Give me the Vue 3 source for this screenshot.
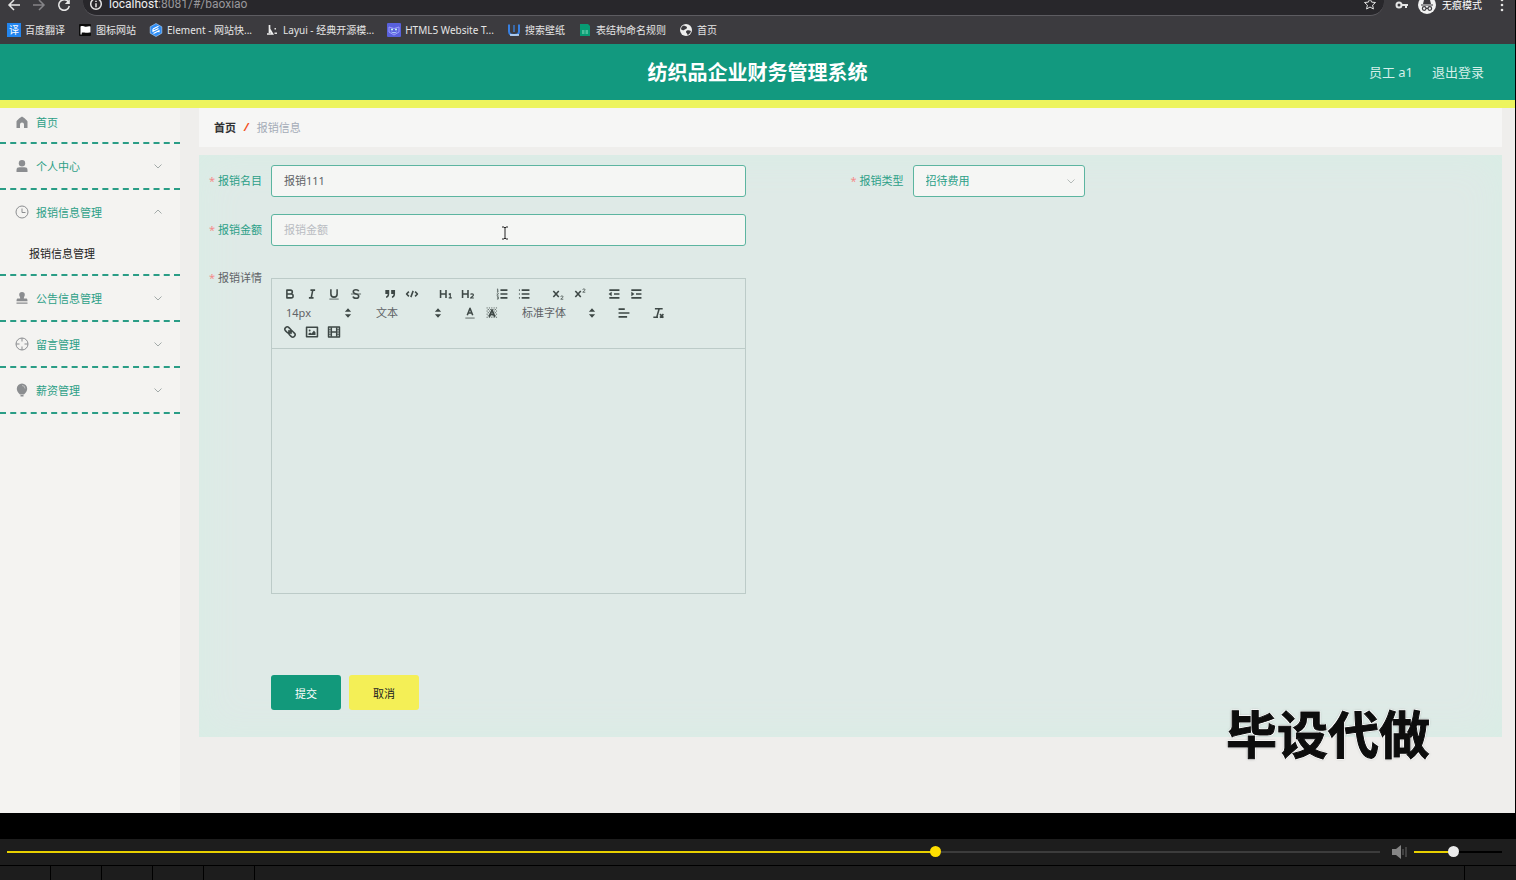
<template>
  <div class="player">
    <div class="screen">
      <div class="browser">
        <div class="toolbar">
          <svg class="nav" viewBox="0 0 14 14"><path d="M13 7H2M7 2L2 7l5 5" /></svg>
          <svg class="nav dim" viewBox="0 0 14 14"><path d="M1 7h11M7 2l5 5-5 5" /></svg>
          <svg class="nav" viewBox="0 0 14 14"><path d="M11.5 4A5.3 5.3 0 1 0 12.300 8" /><path class="solid" d="M12.800 1v5H7.800z" /></svg>
          <div class="address">
            <svg class="info" viewBox="0 0 14 14"><circle cx="7" cy="7" r="5.300" /><path d="M7 6.300v4M7 3.700v1.300" /></svg>
            <span class="url"><b>localhost</b>:8081/#/baoxiao</span>
            <svg class="star" viewBox="0 0 14 14"><path d="M7 1.500l1.600 3.600 3.900.4-2.900 2.600.8 3.900L7 10l-3.400 2 .8-3.900L1.500 5.500l3.900-.4z" /></svg>
          </div>
          <svg class="key" viewBox="0 0 14 14"><circle cx="4" cy="7" r="2.500" /><path d="M6.500 7H13M11 7v3" /></svg>
          <div class="incognito">
            <svg viewBox="0 0 18 18">
              <circle cx="9" cy="9" r="9" fill="#f1f1f1" />
              <path d="M6 4h6l1 4H5zM3 8.500h12v1H3z" fill="#3a393d" />
              <g fill="none" stroke="#3a393d" stroke-width="1.200"><circle cx="6.200" cy="12.500" r="1.800" /><circle cx="11.800" cy="12.500" r="1.800" /><path d="M8 12.300h2" /></g>
            </svg>
            <span>无痕模式</span>
          </div>
          <svg class="more" viewBox="0 0 4 14"><circle cx="2" cy="2" r="1.300" /><circle cx="2" cy="7" r="1.300" /><circle cx="2" cy="12" r="1.300" /></svg>
        </div>
        <nav class="bookmarks">
          <a v-for="b in bookmarks" :key="b.text" href="#" :class="b.icon">
            <span v-if="b.icon === 'fanyi'" class="fanyi-icon">译</span>
            <svg v-else viewBox="0 0 14 14" v-html="bookmarkIcons[b.icon]"></svg>
            <span>{{ b.text }}</span>
          </a>
        </nav>
      </div>

      <header class="header">
        <h1>纺织品企业财务管理系统</h1>
        <div class="user">
          <span>员工 a1</span>
          <a href="#">退出登录</a>
        </div>
      </header>

      <div class="body">
        <aside class="sidebar">
          <ul>
            <li v-for="m in menus" :key="m.text" :class="{ home: m.icon === 'home' }">
              <a href="#" class="menu-title">
                <svg class="menu-icon" viewBox="0 0 14 14" v-html="menuIcons[m.icon]"></svg>
                <span>{{ m.text }}</span>
                <svg v-if="m.icon !== 'home'" class="arrow" :class="{ open: m.child }" viewBox="0 0 8 8"><path d="M.5 2.500L4 6l3.500-3.500" /></svg>
              </a>
              <a v-if="m.child" href="#" class="menu-child">{{ m.child }}</a>
            </li>
          </ul>
        </aside>

        <main class="main">
          <nav class="breadcrumb">
            <a href="#">首页</a>
            <i>/</i>
            <span>报销信息</span>
          </nav>

          <form class="form" @submit.prevent>
            <div class="item">
              <label for="name">报销名目</label>
              <input id="name" v-model="form.name" class="field" type="text">
            </div>
            <div class="item">
              <label for="type">报销类型</label>
              <div class="select">
                <select id="type" v-model="form.type">
                  <option>招待费用</option>
                </select>
                <svg class="arrow" viewBox="0 0 8 8"><path d="M.5 2.500L4 6l3.500-3.500" /></svg>
              </div>
            </div>
            <div class="item wide">
              <label for="money">报销金额</label>
              <div class="field-box">
                <input id="money" v-model="form.money" class="field" type="text" placeholder="报销金额">
                <svg class="cursor" viewBox="0 0 8 14"><path d="M1 1h2l1 1 1-1h2M4 2v10M1 13h2l1-1 1 1h2" /></svg>
              </div>
            </div>
            <div class="item wide detail">
              <label for="detail">报销详情</label>
              <div class="editor">
                <div class="tools">
                  <div v-for="(row, r) in tools" :key="r" class="tool-row">
                    <div v-for="(group, g) in row" :key="g" class="tool-group">
                      <template v-for="t in group" :key="t.pick || t">
                        <label v-if="t.pick" class="picker" :class="{ long: t.long }">
                          <select :aria-label="t.pick"><option>{{ t.pick }}</option></select>
                          <svg viewBox="0 0 18 18"><path class="fill" d="M5 7.500L9 3l4 4.500zM5 10.500L9 15l4-4.500z" /></svg>
                        </label>
                        <button v-else type="button" :aria-label="t">
                          <svg viewBox="0 0 18 18" v-html="toolIcons[t]"></svg>
                        </button>
                      </template>
                    </div>
                  </div>
                </div>
                <textarea id="detail" v-model="form.detail"></textarea>
              </div>
            </div>
            <div class="actions">
              <button type="submit" class="btn primary">提交</button>
              <button type="button" class="btn cancel">取消</button>
            </div>
          </form>
        </main>
      </div>

      <div class="watermark">毕设代做</div>
    </div>

    <div class="controls">
      <input
        v-model="progress"
        class="range seek"
        type="range"
        max="1000"
        aria-label="进度"
        :style="{ '--p': progress / 10 + '%' }"
      >
      <svg class="speaker" viewBox="0 0 16 14"><path d="M0 4h4l5-4v14L4 10H0z" fill="#858585" /><path d="M11 4v6M14 2v10" stroke="#666" /></svg>
      <input
        v-model="volume"
        class="range volume"
        type="range"
        max="1000"
        aria-label="音量"
        :style="{ '--p': volume / 10 + '%' }"
      >
    </div>
    <div class="cells">
      <span v-for="n in 5" :key="n"></span>
    </div>
  </div>
</template>

<script setup>
import { reactive, ref } from 'vue'

const progress = ref(678)
const volume = ref(442)

const form = reactive({
  name: '报销111',
  type: '招待费用',
  money: '',
  detail: ''
})

const bookmarks = [
  { icon: 'fanyi', text: '百度翻译' },
  { icon: 'flag', text: '图标网站' },
  { icon: 'element', text: 'Element - 网站快...' },
  { icon: 'layui', text: 'Layui - 经典开源模...' },
  { icon: 'html5', text: 'HTML5 Website T...' },
  { icon: 'paper', text: '搜索壁纸' },
  { icon: 'sheet', text: '表结构命名规则' },
  { icon: 'globe', text: '首页' }
]

const bookmarkIcons = {
  flag: '<rect x="1" y="1" width="12" height="12" rx="1" fill="#0c0c0c"/><path d="M2.500 11.500V3.500c2.500-1.200 3.500.6 5.500.2s3-.7 4.500-.2V9.500c-2-.4-3 .6-5 .2s-3-.4-3.800.1v1.700z" fill="#fff"/>',
  element: '<path d="M7 .5l5.800 3.300v6.400L7 13.500l-5.800-3.300V3.800z" fill="#2e8df5" stroke="#bcdcff" stroke-width=".6"/><path d="M4 6l5.500-2.800M4.500 10.500l5.500-2.800v1.500M4 6v2.300L9.500 5.500" stroke="#fff" stroke-width="1.200" fill="none"/>',
  layui: '<path d="M4.500 2v8M4.500 6l3 5H2" stroke="#eee" stroke-width="1.700" fill="none"/><path d="M9.500 5h1.500v1.500H9.500zM9.500 9.500H12V11H9.500z" fill="#ddd"/>',
  html5: '<rect x="0" y="0" width="14" height="14" rx="1" fill="#5961dc"/><path d="M2 4l5 1.500L12 4v5l-5 3-5-3z" fill="none" stroke="#9c9bff"/><circle cx="5" cy="6.500" r="1" fill="#cfe"/><circle cx="9" cy="6.500" r="1" fill="#cfe"/><path d="M4.500 9c1 1 4 1 5 0" stroke="#bdf" fill="none"/>',
  paper: '<path d="M2 1.500v7c0 3 2 3.500 5 3.500s5-.5 5-3.500v-7" fill="none" stroke="#377fe0" stroke-width="2"/><path d="M7 2v7" stroke="#3a78c8" stroke-width="1.500"/><path d="M3 12h9" stroke="#cfe3fa" stroke-width="1.500"/>',
  sheet: '<path d="M2 1h8l2 2v10H2z" fill="#079b73"/><path d="M4 8h2.500M7.500 8H10M4 10h2.500M7.500 10H10" stroke="#8fe0c2"/>',
  globe: '<circle cx="7" cy="7" r="6" fill="#eee"/><path d="M5 2.500c1 1 3 .5 3 2S6 6 5 7 3 6 2 6.500C2 4.500 3 3 5 2.500zM8 7.500c1.500-.5 3 0 4 .5-.5 2-2 3.500-3.500 4 .2-1.500-1.500-2-1.500-3s.5-1.200 1-1.500z" fill="#3b3a3e"/>'
}

const menus = [
  { icon: 'home', text: '首页' },
  { icon: 'user', text: '个人中心' },
  { icon: 'clock', text: '报销信息管理', child: '报销信息管理' },
  { icon: 'stamp', text: '公告信息管理' },
  { icon: 'aim', text: '留言管理' },
  { icon: 'bulb', text: '薪资管理' }
]

const menuIcons = {
  home: '<path d="M7 1.500c.4 0 5.500 4 5.500 4.900V13H9V9.500a2 2 0 0 0-4 0V13H1.500V6.400C1.500 5.500 6.600 1.500 7 1.500z" fill="#8b8d90"/>',
  user: '<circle cx="7" cy="4.300" r="3.200" fill="#8b8d90"/><path d="M1.500 13v-2c0-2 1.200-2.700 3-2.700h5c1.800 0 3 .7 3 2.700v2z" fill="#8b8d90"/>',
  clock: '<circle cx="7" cy="7" r="6" fill="none" stroke="#8b8d90"/><path d="M7 3.500V7.500h3.500" fill="none" stroke="#8b8d90"/>',
  stamp: '<path d="M7 1a2.800 2.800 0 0 1 2.800 2.800C9.800 5 8.800 6 8.800 7.500h2.200c1 0 1.500.5 1.500 2.800h-11C1.500 8 2 7.500 3 7.500h2.200C5.200 6 4.200 5 4.200 3.800A2.800 2.800 0 0 1 7 1zM1.500 11.500h11v1.200h-11z" fill="#8b8d90"/>',
  aim: '<circle cx="7" cy="7" r="6" fill="none" stroke="#8b8d90"/><path d="M7 1v3.500M7 9.500V13M1 7h3.500M9.500 7H13" stroke="#8b8d90"/>',
  bulb: '<path d="M7 .5a5.200 5.200 0 0 1 5.200 5.200C12.200 8.500 9.500 11 9 11.500H5C4.500 11 1.800 8.500 1.800 5.700A5.200 5.200 0 0 1 7 .5z" fill="#8b8d90"/><path d="M5.500 12h3v1.500h-3z" fill="#8b8d90"/><path d="M7 2.500a3 3 0 0 1 3 3" fill="none" stroke="#c9caca" stroke-width=".8"/>'
}

const tools = [
  [
    ['bold', 'italic', 'underline', 'strike'],
    ['quote', 'code'],
    ['h1', 'h2'],
    ['ordered', 'bullet'],
    ['sub', 'super'],
    ['outdent', 'indent']
  ],
  [
    [{ pick: '14px' }],
    [{ pick: '文本' }],
    ['color', 'background'],
    [{ pick: '标准字体', long: true }],
    ['align'],
    ['clean']
  ],
  [['link', 'image', 'video']]
]

const toolIcons = {
  bold: '<path d="M5 4h4.500a2.500 2.500 0 0 1 0 5H5zM5 9h5.500a2.500 2.500 0 0 1 0 5H5z"/>',
  italic: '<path d="M7 4h6M5 14h6M8 14l2-10"/>',
  underline: '<path d="M5 3v6a4 4 0 0 0 8 0V3"/><rect class="fill" x="3" y="15" width="12" height="1"/>',
  strike: '<path class="thin" d="M2.500 9h13"/><path d="M12.500 5.500C12 4 10.500 3.500 9 3.500c-2 0-3.500 1-3.500 2.700C5.500 8 7 8.500 9 9s3.500 1 3.500 2.800-1.500 2.700-3.500 2.700-3.500-.8-3.800-2.300"/>',
  quote: '<path class="fill" d="M3 4h5v5c0 3-1.500 4.500-4 5v-2c1.300-.5 2-1.300 2-3H3zM10.500 4h5v5c0 3-1.500 4.500-4 5v-2c1.300-.5 2-1.300 2-3h-3z"/>',
  code: '<path d="M5 6L2 9l3 3M13 6l3 3-3 3M10.500 5l-3 8"/>',
  h1: '<path d="M2 4v10M9 4v10M2 9h7"/><path d="M12.500 9.500l2-1V14M12.500 14h4" style="stroke-width:1.500"/>',
  h2: '<path d="M2 4v10M9 4v10M2 9h7"/><path d="M12.300 9.700c.4-1.300 3.700-1.400 3.700.5 0 1.700-2.500 2.200-3.700 3.900h4.200" style="stroke-width:1.500"/>',
  ordered: '<path d="M7 4h9M7 9h9M7 14h9"/><path class="thin" d="M2.500 5.500h2M3.500 5.500v-3l-1 .5M2.300 8c.5-.9 2-.7 2 .3 0 .7-1.500 1.200-2 2.200h2.200M2.500 12.500h1.700v3H2.500M3 14h1.200"/>',
  bullet: '<path d="M6 4h10M6 9h10M6 14h10M2.500 4h1M2.500 9h1M2.500 14h1"/>',
  sub: '<path d="M3 5l7 8M10 5l-7 8"/><path class="thin" d="M12.500 12.500c.2-1.500 3-1.500 3 .1 0 1.200-2 1.600-3 3.100h3.300"/>',
  super: '<path d="M3 5l7 8M10 5l-7 8"/><path class="thin" d="M12.500 3.500c.2-1.500 3-1.500 3 .1 0 1.200-2 1.600-3 3.100h3.300"/>',
  outdent: '<path d="M3 14h13M3 4h13M9 9h7"/><path class="fill" d="M2 9l4-3v6z"/>',
  indent: '<path d="M3 14h13M3 4h13M9 9h7"/><path class="fill" d="M7 9L3 6v6z"/>',
  color: '<path class="thin" d="M3 15.500h12"/><path d="M5.500 12L9 3l3.500 9M6.500 9h5"/>',
  background: '<path class="thin" style="stroke-dasharray:1.500 1.500" d="M2 2.500h14M3.500 4.500h12M2 6.500h14M3.500 8.500h12M2 10.500h14M3.500 12.500h12M2 14.500h14"/><path d="M5.500 14L9 5l3.500 9M6.500 11h5"/>',
  align: '<path d="M2 9h14M2 14h11M2 4h8"/>',
  clean: '<path d="M5 3.500h10M10.500 3.500L7.500 14M3 14.500h6M11.500 10.500l4.500 4.500M16 10.500L11.500 15"/>',
  link: '<g transform="rotate(45 9 9)"><rect x="1" y="6" width="9" height="6" rx="3"/><rect x="8" y="6" width="9" height="6" rx="3"/><path d="M6 9h6"/></g>',
  image: '<rect x="2" y="3" width="14" height="12"/><circle class="fill" cx="6" cy="7" r="1.200"/><path class="fill" d="M4.500 13v-2l2-1.500 2 1.500 3-4 2 2.500V13z"/>',
  video: '<rect x="2" y="2.500" width="14" height="13"/><path d="M5.500 3v12M12.500 3v12M5.500 9h7"/><path class="thin" d="M2 6h3M2 9h3M2 12h3M13 6h3M13 9h3M13 12h3"/>'
}
</script>

<style>
body {
  margin: 0;
  background: #000;
}
</style>

<style scoped>
* {
  box-sizing: border-box;
}

.player {
  display: flex;
  flex-direction: column;
  min-height: 100vh;
  background: #000;
  color: #606266;
  font-family: "Noto Sans", "Noto Sans CJK SC", sans-serif;
  font-size: 11px;
}

a {
  color: inherit;
  text-decoration: none;
}

input,
select,
textarea,
button {
  font: inherit;
  color: inherit;
}

.screen {
  position: relative;
  display: flex;
  flex: 1;
  flex-direction: column;
  margin-bottom: 26px;
  border-right: 1px solid #000;
  background: #efeeec;
  overflow: hidden;
}

/* browser chrome */
.browser {
  height: 44px;
  background: #3c3b3f;
  color: #e6e6e6;
}

.toolbar {
  display: flex;
  align-items: center;
  height: 28px;
  margin-top: -12px;
  padding: 0 11px 0 7px;
}

.toolbar > svg,
.address svg {
  flex: none;
  width: 14px;
  height: 14px;
  fill: none;
  stroke: #e6e6e6;
  stroke-width: 1.5;
}

.toolbar > svg {
  margin-top: 6px;
}

.nav {
  margin-right: 11px;
}

.toolbar .dim {
  stroke: #858488;
}

.nav .solid,
.toolbar .more {
  fill: #e6e6e6;
  stroke: none;
}

.address {
  display: flex;
  flex: 1;
  align-items: center;
  height: 28px;
  margin-left: 1px;
  padding: 5px 7px 0 6px;
  border-bottom: 1px solid #5d5c61;
  border-radius: 14px;
  background: #28272b;
}

.url {
  flex: 1;
  margin-left: 6px;
  color: #98979b;
  font-family: Roboto, sans-serif;
  font-size: 12px;
  line-height: 8px;
}

.url b {
  color: #f0f0f0;
  font-weight: 400;
}

.address .star {
  stroke-width: 1;
}

.toolbar .key {
  margin: 6px 9px 0 11px;
  stroke-width: 2;
}

.incognito {
  display: flex;
  align-items: center;
  gap: 6px;
  margin-top: 6px;
  color: #fff;
  font-size: 10px;
}

.incognito span {
  line-height: 10px;
}

.incognito svg {
  width: 18px;
  height: 18px;
}

.toolbar .more {
  width: 4px;
  margin-left: 18px;
}

.bookmarks {
  display: flex;
  align-items: center;
  gap: 13px;
  height: 28px;
  padding: 0 0 1px 7px;
  font-size: 10px;
  white-space: nowrap;
}

.bookmarks a {
  display: flex;
  align-items: center;
  gap: 4px;
}

.bookmarks svg,
.fanyi-icon {
  flex: none;
  width: 14px;
  height: 14px;
}

.fanyi-icon {
  background: #2385ee;
  color: #fff;
  line-height: 14px;
  text-align: center;
}

/* page header */
.header {
  display: grid;
  grid-template-columns: 1fr auto 1fr;
  align-items: center;
  height: 64px;
  padding-bottom: 2px;
  border-bottom: 8px solid #edf45e;
  background: #12997f;
  color: #fff;
}

.header h1 {
  grid-column: 2;
  margin: 0;
  font-size: 20px;
  font-weight: 700;
}

.user {
  display: flex;
  justify-content: flex-end;
  gap: 19px;
  padding-right: 31px;
  color: #d5efe9;
  font-size: 13px;
}

.body {
  display: flex;
  flex: 1;
}

/* side menu */
.sidebar {
  flex: none;
  width: 180px;
  background: #f4f3f1;
  color: #2c9f87;
}

.sidebar ul {
  margin: 0;
  padding: 0;
  list-style: none;
}

.sidebar li {
  border-bottom: 2px dashed #2a9d86;
}

.menu-title {
  display: flex;
  align-items: center;
  gap: 7px;
  height: 44px;
  padding: 0 18px 0 15px;
}

.home .menu-title {
  height: 34px;
  padding-bottom: 6px;
}

.menu-icon {
  width: 14px;
  height: 14px;
}

.arrow {
  width: 8px;
  height: 8px;
  margin-left: auto;
  fill: none;
  stroke: #a3aaa9;
}

.arrow.open {
  transform: rotate(180deg);
}

.menu-child {
  display: block;
  padding-left: 29px;
  color: #222;
  line-height: 40px;
}

/* content */
.main {
  flex: 1;
  padding: 0 13px 0 19px;
}

.breadcrumb {
  display: flex;
  align-items: center;
  gap: 8px;
  height: 39px;
  margin-bottom: 8px;
  padding: 0 0 2px 15px;
  background: #f6f6f5;
}

.breadcrumb a {
  color: #303133;
  font-weight: 700;
}

.breadcrumb i {
  color: #f4511e;
  font-weight: 700;
}

.breadcrumb span {
  color: #a4abb7;
}

.form {
  display: grid;
  grid-template-columns: 1fr 1fr;
  row-gap: 17px;
  padding: 10px 10px 27px;
  background: #dfeae7;
  box-shadow: inset 0 0 40px #d8eee5;
}

.item {
  display: flex;
  align-items: flex-start;
}

.wide {
  grid-column: 1;
}

.item > label {
  flex: none;
  width: 62px;
  padding-right: 10px;
  color: #2c9f87;
  line-height: 32px;
  text-align: right;
  white-space: nowrap;
}

.item > label::before {
  content: "*";
  margin-right: 3px;
  color: #f58b8b;
}

.detail > label {
  color: #606266;
  line-height: 30px;
}

.field,
.select select {
  width: 100%;
  height: 32px;
  padding: 0 12px 2px;
  border: 1px solid #5cb5a0;
  border-radius: 3px;
  outline: none;
  background: #f5f6f4;
}

.item > .field,
.field-box,
.editor {
  width: 74%;
}

.field::placeholder {
  color: #b9bcc2;
}

.field-box {
  position: relative;
}

.cursor {
  position: absolute;
  top: 12px;
  left: 48%;
  width: 8px;
  height: 14px;
  margin-left: 2px;
  fill: none;
  stroke: #222;
}

.select {
  display: flex;
  align-items: center;
  width: 172px;
}

.select select {
  appearance: none;
  color: #2c9f87;
}

.select .arrow {
  flex: none;
  margin-left: -18px;
  stroke: #b5bbb9;
  pointer-events: none;
}

.editor {
  display: flex;
  flex-direction: column;
  margin-top: 15px;
  border: 1px solid #bccbc8;
}

.tools {
  padding: 5px 7px 7px;
  border-bottom: 1px solid #bccbc8;
}

.tool-row,
.tool-group {
  display: flex;
}

.tool-row {
  gap: 12px;
}

.tool-group button {
  display: flex;
  align-items: center;
  justify-content: center;
  width: 22px;
  height: 19px;
  padding: 0;
  border: 0;
  background: none;
}

.tool-group svg {
  flex: none;
  width: 14px;
  height: 14px;
  fill: none;
  stroke: #3e4846;
  stroke-width: 2;
  stroke-linejoin: round;
}

.tool-group :deep(.thin) {
  stroke-width: 1;
}

.tool-group :deep(.fill) {
  fill: #3e4846;
  stroke: none;
}

.picker {
  display: flex;
  align-items: center;
  width: 78px;
  height: 19px;
}

.picker.long {
  width: 86px;
}

.picker select {
  flex: 1;
  min-width: 0;
  padding: 0 0 0 7px;
  border: 0;
  appearance: none;
  background: none;
}

.picker svg {
  margin-right: 2px;
}

.editor textarea {
  height: 244px;
  padding: 10px 12px;
  border: 0;
  outline: none;
  background: none;
  resize: none;
}

.actions {
  display: flex;
  grid-column: 1 / -1;
  gap: 8px;
  padding: 64px 0 0 62px;
}

.btn {
  width: 70px;
  height: 35px;
  border: 0;
  border-radius: 3px;
}

.primary {
  background: #12997b;
  color: #fff;
}

.cancel {
  background: #f4ef56;
  color: #222;
}

.watermark {
  position: absolute;
  right: 85px;
  bottom: 51px;
  color: #0d0d0d;
  font-family: "Noto Sans CJK SC", sans-serif;
  font-size: 51px;
  font-weight: 700;
  line-height: 60px;
  -webkit-text-stroke: 1px #0d0d0d;
  text-shadow: -1px -1px #fff, 1px -1px #fff, -1px 1px #fff, 1px 1px #fff, 0 0 3px #777;
}

/* player bar */
.controls {
  display: flex;
  align-items: center;
  height: 26px;
  padding: 0 14px 1px 7px;
  background: #1d1d1d;
}

.range {
  height: 11px;
  margin: 0;
  appearance: none;
  background: linear-gradient(#e8d000, #e8d000) left / var(--p) 2px no-repeat,
    linear-gradient(var(--rail), var(--rail)) center / 100% 2px no-repeat;
}

.range::-webkit-slider-thumb {
  width: 11px;
  height: 11px;
  border-radius: 50%;
  appearance: none;
  background: var(--thumb);
}

.seek {
  --rail: #3c3c3c;
  --thumb: #ffde00;
  flex: 1;
}

.volume {
  --rail: #000;
  --thumb: #ebebeb;
  width: 88px;
}

.speaker {
  width: 16px;
  height: 14px;
  margin: 0 6px 0 12px;
}

.cells {
  display: flex;
  height: 14px;
  margin-top: 1px;
  background: #1d1d1d;
}

.cells span {
  width: 51px;
  border-right: 1px solid #000;
}

.cells::after {
  content: "";
  width: 51px;
  margin-left: auto;
  border-left: 1px solid #000;
}
</style>
